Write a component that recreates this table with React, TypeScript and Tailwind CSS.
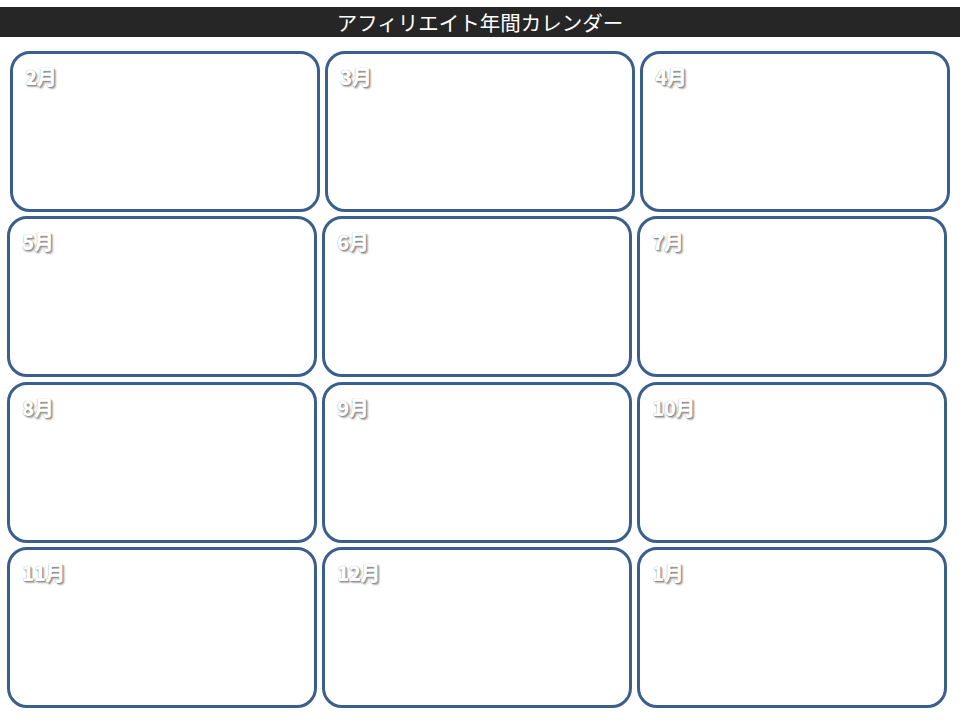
import React from "react";

const rows: { pad: string; months: string[]; mt: string }[] = [
  { pad: "pl-[10px]", months: ["2月", "3月", "4月"], mt: "mt-[14px]" },
  { pad: "pl-[7px]", months: ["5月", "6月", "7月"], mt: "mt-[4px]" },
  { pad: "pl-[7px]", months: ["8月", "9月", "10月"], mt: "mt-[5px]" },
  { pad: "pl-[7px]", months: ["11月", "12月", "1月"], mt: "mt-[4px]" },
];

function Card({ label }: { label: string }) {
  return (
    <div className="w-[310px] h-[161px] rounded-[20px] border-[3px] border-[#3b5f8d] bg-white px-[12px] pt-[10px]">
      <span
        className="text-[20px] font-black leading-[26px] tracking-[-0.5px] text-white [text-shadow:0_0_1px_#8c8c8c,1px_1px_1px_#8c8c8c,2px_2px_2px_#b4b4b4]"
        style={{ fontFamily: '"Noto Sans CJK JP", "Noto Sans", sans-serif' }}
      >
        {label}
      </span>
    </div>
  );
}

export default function App() {
  return (
    <div className="w-[960px] h-[720px] bg-white overflow-hidden">
      <div className="h-[7px]" />
      <div
        className="h-[30px] bg-[#262626] flex items-center justify-center text-white text-[20.5px] leading-[30px]"
        style={{ fontFamily: '"Noto Sans CJK JP", "Noto Sans", sans-serif' }}
      >
        アフィリエイト年間カレンダー
      </div>
      {rows.map((r, i) => (
        <div key={i} className={`flex gap-[5px] ${r.pad} ${r.mt}`}>
          {r.months.map((m) => (
            <Card key={m} label={m} />
          ))}
        </div>
      ))}
    </div>
  );
}
